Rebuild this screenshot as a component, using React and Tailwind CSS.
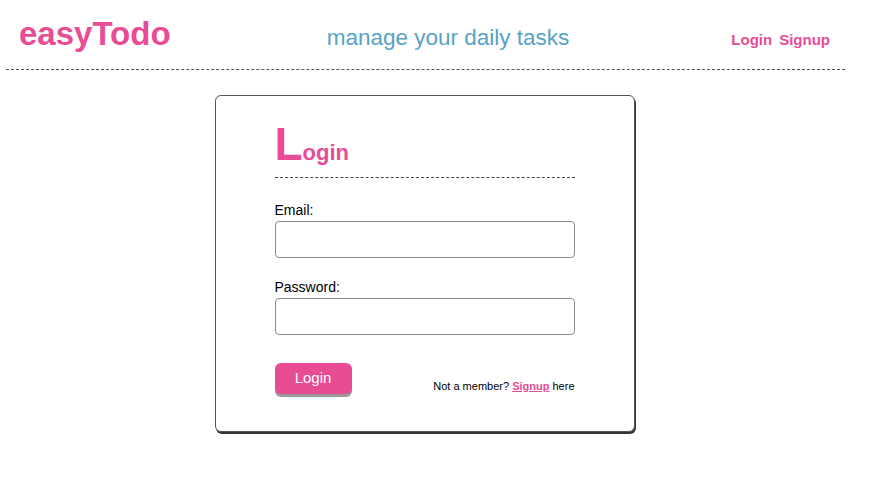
// ============================================================
// easyTodo login page
// Header with logo, tagline and nav links, then the login card.
// ============================================================

const font = { fontFamily: '"Liberation Sans", Arial, Helvetica, sans-serif' };

function Header() {
  return (
    <header>
      <div className="flex items-baseline pt-[17px] pb-[17px] pl-[19px] pr-[65px]">
        <a href="#" className="text-[33px] leading-none font-bold text-[#e84c94]">easyTodo</a>
        <div className="flex-1 text-center pr-[6px]">
          <span className="text-[22.5px] leading-none text-[#56a3c6]">manage your daily tasks</span>
        </div>
        <nav className="flex gap-[7px] text-[15px] leading-none font-bold text-[#e84c94]">
          <a href="#">Login</a>
          <a href="#">Signup</a>
        </nav>
      </div>
      <div className="ml-[6px] w-[839px] border-b border-dashed border-[#555]" />
    </header>
  );
}

function Field({ label, type, first }) {
  return (
    <div className={first ? 'mt-[24px]' : 'mt-[21px]'}>
      <label className="block text-[14px] leading-[16px] text-black mb-[3px]">{label}</label>
      <input
        type={type}
        className="block w-full h-[37px] rounded-[4px] border border-[#8a8a8a] bg-white px-2 text-[14px] outline-none"
      />
    </div>
  );
}

function LoginCard() {
  return (
    <div className="mx-auto mt-[25px] w-[420px] rounded-[6px] border border-[#555] bg-white px-[59px] pt-[25px] pb-[37px] shadow-[1px_2px_0_0_#333]">
      <h1 className="text-[46px] leading-none font-bold text-[#e84c94] pb-[10px] border-b border-dashed border-[#444]">
        L<span className="text-[22px]">ogin</span>
      </h1>

      <Field label="Email:" type="email" first />
      <Field label="Password:" type="password" />

      <div className="mt-[28px] flex items-end justify-between">
        <button className="w-[77px] h-[31px] rounded-[6px] bg-[#e84c94] text-white text-[15px] shadow-[0_3px_0_0_#9a9a9a]">
          Login
        </button>
        <p className="text-[11px] leading-none text-black pb-[2px]">
          Not a member? <a href="#" className="font-bold text-[#e84c94] underline">Signup</a> here
        </p>
      </div>
    </div>
  );
}

export default function App() {
  return (
    <div className="min-h-screen bg-white" style={font}>
      <Header />
      <div className="ml-[5px] w-[839px]">
        <LoginCard />
      </div>
    </div>
  );
}
